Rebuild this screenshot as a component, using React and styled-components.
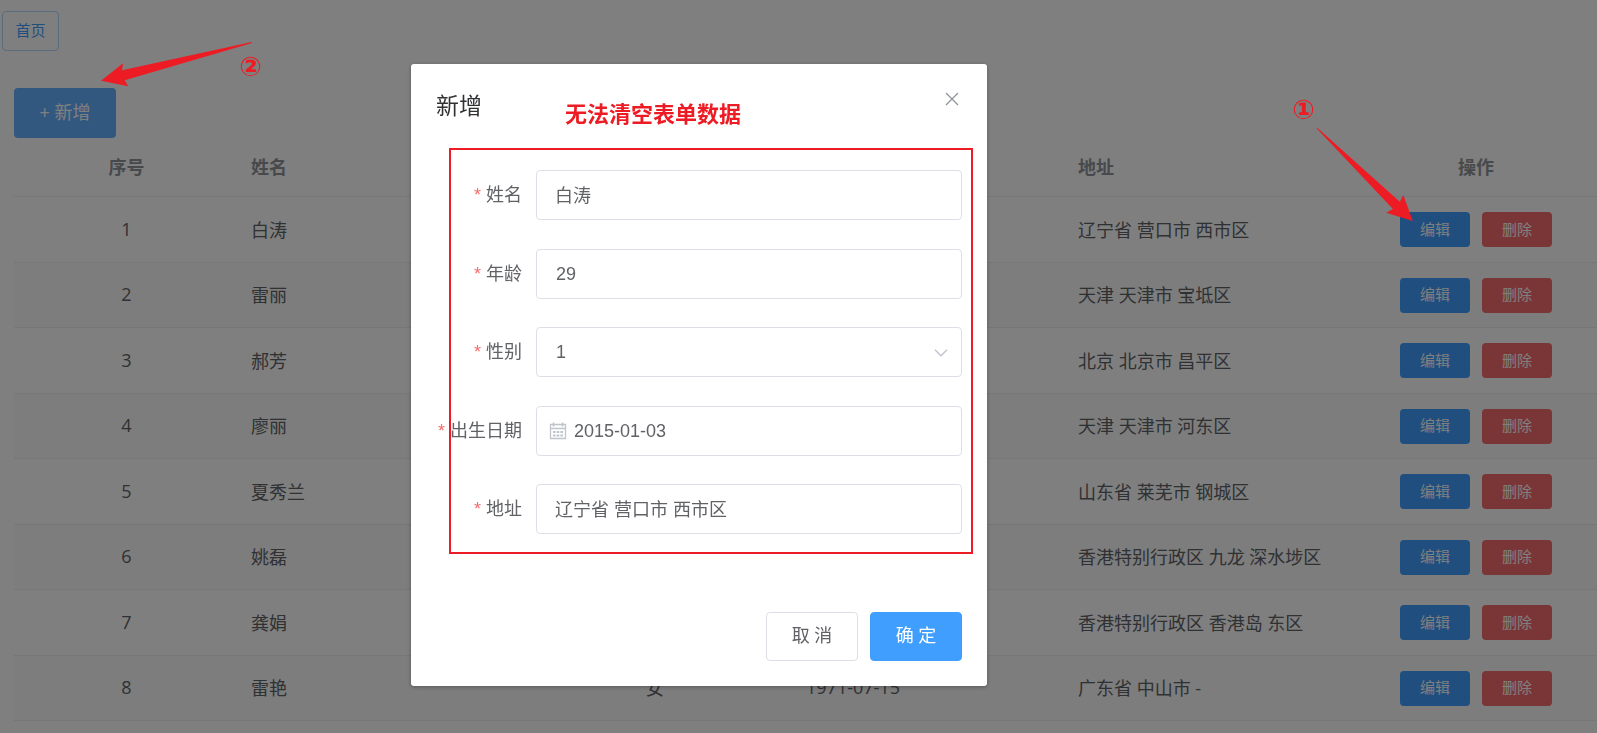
import { useState } from "react";
// Styling
import styled, { createGlobalStyle } from "styled-components";

// Data
const people = [
    { id: 1, name: "白涛", address: "辽宁省 营口市 西市区" },
    { id: 2, name: "雷丽", address: "天津 天津市 宝坻区" },
    { id: 3, name: "郝芳", address: "北京 北京市 昌平区" },
    { id: 4, name: "廖丽", address: "天津 天津市 河东区" },
    { id: 5, name: "夏秀兰", address: "山东省 莱芜市 钢城区" },
    { id: 6, name: "姚磊", address: "香港特别行政区 九龙 深水埗区" },
    { id: 7, name: "龚娟", address: "香港特别行政区 香港岛 东区" },
    { id: 8, name: "雷艳", sex: "女", birth: "1971-07-15", address: "广东省 中山市 -" },
];

const CalendarIcon = () => (
    <svg width="18" height="18" viewBox="0 0 18 18" fill="none" stroke="#c0c4cc">
        <path d="M1.5 2.5h15v14h-15zM1.5 6.5h15" strokeWidth="1.3" />
        <path d="M4.5 0.5v4M13.5 0.5v4" strokeWidth="1.6" />
        <path d="M4 10h10M4 13.5h10" strokeWidth="1.8" strokeDasharray="2.6 1.1" />
    </svg>
);

const ChevronIcon = () => (
    <svg width="14" height="8" viewBox="0 0 14 8" fill="none" stroke="#c0c4cc" strokeWidth="1.5">
        <path d="M1 0.8l6 6 6-6" />
    </svg>
);

const CloseIcon = () => (
    <svg width="14" height="14" viewBox="0 0 14 14" stroke="#909399" strokeWidth="1.3">
        <path d="M1 1l12 12M13 1L1 13" />
    </svg>
);

const UserTable = () => (
    <Table>
        <colgroup>
            <Col $width={225} />
            <Col $width={198} />
            <Col $width={197} />
            <Col $width={160} />
            <Col $width={272} />
            <Col />
            <Col $width={242} />
        </colgroup>
        <thead>
            <tr>
                <HeadCell $center>序号</HeadCell>
                <HeadCell>姓名</HeadCell>
                <HeadCell>年龄</HeadCell>
                <HeadCell>性别</HeadCell>
                <HeadCell>出生日期</HeadCell>
                <HeadCell>地址</HeadCell>
                <HeadCell $center>操作</HeadCell>
            </tr>
        </thead>
        <tbody>
            {people.map(person => (
                <Row key={person.id}>
                    <Cell $center>{person.id}</Cell>
                    <Cell>{person.name}</Cell>
                    <Cell />
                    <Cell>{person.sex}</Cell>
                    <Cell>{person.birth}</Cell>
                    <Cell>{person.address}</Cell>
                    <ActionCell>
                        <Actions>
                            <SmallButton type="button">编辑</SmallButton>
                            <SmallButton type="button" $danger>删除</SmallButton>
                        </Actions>
                    </ActionCell>
                </Row>
            ))}
        </tbody>
    </Table>
);

const UserDialog = () => {
    const [form, setForm] = useState({
        name: "白涛",
        age: "29",
        sex: "1",
        birth: "2015-01-03",
        address: "辽宁省 营口市 西市区",
    });

    const changeHandler = (event) => {
        setForm({ ...form, [event.target.name]: event.target.value });
    };

    return (
        <Dialog role="dialog" aria-labelledby="dialog-title">
            <DialogHeader>
                <h2 id="dialog-title">新增</h2>
                <CloseButton type="button" aria-label="Close"><CloseIcon /></CloseButton>
            </DialogHeader>
            <Form>
                <FormItem>
                    <Label htmlFor="name">姓名</Label>
                    <TextInput id="name" name="name" value={form.name} onChange={changeHandler} />
                </FormItem>
                <FormItem>
                    <Label htmlFor="age">年龄</Label>
                    <Input id="age" name="age" value={form.age} onChange={changeHandler} />
                </FormItem>
                <FormItem>
                    <Label htmlFor="sex">性别</Label>
                    <Field>
                        <Select id="sex" name="sex" value={form.sex} onChange={changeHandler}>
                            <option value="1">1</option>
                        </Select>
                        <Suffix><ChevronIcon /></Suffix>
                    </Field>
                </FormItem>
                <FormItem>
                    <Label htmlFor="birth">出生日期</Label>
                    <Field>
                        <Prefix><CalendarIcon /></Prefix>
                        <Input id="birth" name="birth" $icon value={form.birth} onChange={changeHandler} />
                    </Field>
                </FormItem>
                <FormItem>
                    <Label htmlFor="address">地址</Label>
                    <TextInput id="address" name="address" value={form.address} onChange={changeHandler} />
                </FormItem>
            </Form>
            <DialogFooter>
                <Button type="button">取 消</Button>
                <Button type="button" $primary>确 定</Button>
            </DialogFooter>
            <FormFrame />
            <Remark>无法清空表单数据</Remark>
        </Dialog>
    );
};

const App = () => (
    <>
        <GlobalStyle />
        <Page>
            <HomeButton type="button">首页</HomeButton>
            <Content>
                <AddButton type="button">+ 新增</AddButton>
                <UserTable />
            </Content>
        </Page>
        <Overlay>
            <UserDialog />
        </Overlay>
        <Arrow $left={101} $top={42} width="152" height="46" viewBox="0 0 152 46">
            <path d="M0 38.7L22 21.3L21 28.3L150.7 0L151 1L23.7 38.3L27.3 44.3Z" />
        </Arrow>
        <Step $left={239} $top={51}>②</Step>
        <Arrow $left={1316} $top={128} width="98" height="94" viewBox="0 0 98 94">
            <path d="M0.3 0L1.8 0.3L83.8 73.7L87.3 67L96.8 93L70.2 84.7L76.9 81Z" />
        </Arrow>
        <Step $left={1292} $top={94}>①</Step>
    </>
);

const GlobalStyle = createGlobalStyle`
    * {
        box-sizing: border-box;
    }

    body {
        margin: 0;
        overflow: hidden;
        background: white;
    }

    body, button {
        font-family: "Open Sans", "Noto Sans CJK SC", sans-serif;
    }

    body, button, input, select {
        font-size: 18px;
        color: #606266;
    }
`;

const Page = styled.div`
    padding: 11px 0 0 2px;
`;

const Content = styled.main`
    padding: 37px 0 0 12px;
`;

const HomeButton = styled.button`
    display: block;
    min-width: 57px;
    height: 40px;
    padding: 0 12px 3px;
    border: 1px solid #b3d8ff;
    border-radius: 4px;
    background: white;
    color: #409eff;
    font-size: 15px;
`;

const AddButton = styled.button`
    display: block;
    min-width: 102px;
    height: 50px;
    padding: 0 25px 5px;
    border: none;
    border-radius: 4px;
    background: #66b1ff;
    color: white;
`;

const Table = styled.table`
    width: 100%;
    table-layout: fixed;
    border-collapse: separate;
    border-spacing: 0;
`;

const Col = styled.col`
    width: ${({ $width }) => $width ? `${$width}px` : "auto"};
`;

const HeadCell = styled.th`
    height: 59px;
    padding: 0 12px 2px;
    border-bottom: 1px solid #ebeef5;
    color: #909399;
    font-weight: bold;
    text-align: ${({ $center }) => $center ? "center" : "left"};
`;

const Cell = styled.td`
    height: 66px;
    padding: 0 12px 2px;
    border-bottom: 1px solid #ebeef5;
    white-space: nowrap;
    text-align: ${({ $center }) => $center ? "center" : "left"};
`;

const ActionCell = styled(Cell)`
    padding-bottom: 0;
`;

const Row = styled.tr`
    &:nth-child(even) ${Cell} {
        height: 65px;
        background: #fafafa;
    }
`;

const Actions = styled.div`
    display: flex;
    justify-content: center;
    gap: 12px;
`;

const SmallButton = styled.button`
    width: 70px;
    height: 35px;
    padding: 0 0 3px;
    border: none;
    border-radius: 4px;
    background: ${({ $danger }) => $danger ? "#f56c6c" : "#409eff"};
    color: white;
    font-size: 15px;
`;

const Overlay = styled.div`
    position: fixed;
    inset: 0;
    display: flex;
    align-items: flex-start;
    justify-content: center;
    padding: 64px 199px 0 0;
    background: rgba(0, 0, 0, 0.5);
`;

const Dialog = styled.div`
    position: relative;
    width: 576px;
    border-radius: 3px;
    background: white;
    box-shadow: 0 1px 4px rgba(0, 0, 0, 0.3);
`;

const DialogHeader = styled.div`
    display: flex;
    justify-content: space-between;
    align-items: flex-start;
    padding: 25px 25px 13px;

    h2 {
        margin: 0;
        color: #303133;
        font-size: 23px;
        font-weight: normal;
        line-height: 32px;
    }
`;

const CloseButton = styled.button`
    display: flex;
    padding: 3px;
    border: none;
    background: none;
`;

const Form = styled.form`
    padding: 36px 25px;
`;

const FormItem = styled.div`
    display: flex;
    align-items: center;
    margin-bottom: 29px;

    &:nth-child(even) {
        margin-bottom: 28px;
    }
`;

const Label = styled.label`
    flex: 0 0 100px;
    padding: 0 14px 4px 0;
    text-align: right;
    white-space: nowrap;

    &::before {
        content: "*";
        margin-right: 5px;
        color: #f56c6c;
        font-family: "Liberation Sans", sans-serif;
    }
`;

const Field = styled.div`
    position: relative;
    flex: 1;
    display: flex;
`;

const Input = styled.input`
    flex: 1;
    min-width: 0;
    height: 50px;
    padding: 0 19px;
    padding-left: ${({ $icon }) => $icon ? "37px" : "19px"};
    border: 1px solid #dcdfe6;
    border-radius: 4px;
    background: white;
    outline: none;
    font-family: "Liberation Sans", "Noto Sans CJK SC", sans-serif;
`;

const TextInput = styled(Input)`
    padding: 0 18px 3px;
`;

const Select = styled(Input).attrs({ as: "select" })`
    appearance: none;
`;

const Prefix = styled.span`
    position: absolute;
    top: 16px;
    left: 13px;
    display: flex;
`;

const Suffix = styled.span`
    position: absolute;
    top: 22px;
    right: 14px;
    display: flex;
    pointer-events: none;
`;

const DialogFooter = styled.div`
    display: flex;
    justify-content: flex-end;
    gap: 12px;
    padding: 13px 25px 25px;
`;

const Button = styled.button`
    width: 92px;
    height: 49px;
    padding: 0 0 5px;
    border: 1px solid ${({ $primary }) => $primary ? "#409eff" : "#dcdfe6"};
    border-radius: 4px;
    background: ${({ $primary }) => $primary ? "#409eff" : "white"};
    color: ${({ $primary }) => $primary ? "white" : "#606266"};
`;

// Red marks drawn over the page
const FormFrame = styled.div`
    position: absolute;
    top: 84px;
    left: 38px;
    width: 524px;
    height: 406px;
    border: 2px solid #ed1c24;
    pointer-events: none;
`;

const Remark = styled.strong`
    position: absolute;
    top: 33px;
    left: 154px;
    color: #ed1c24;
    font-size: 22px;
    line-height: 32px;
`;

const Arrow = styled.svg`
    position: absolute;
    top: ${({ $top }) => $top}px;
    left: ${({ $left }) => $left}px;
    fill: #ed1c24;
`;

const Step = styled.strong`
    position: absolute;
    top: ${({ $top }) => $top}px;
    left: ${({ $left }) => $left}px;
    color: #ed1c24;
    font-family: "DejaVu Sans", "Noto Sans CJK SC", sans-serif;
    font-size: 27px;
    line-height: 32px;
`;

export default App;
